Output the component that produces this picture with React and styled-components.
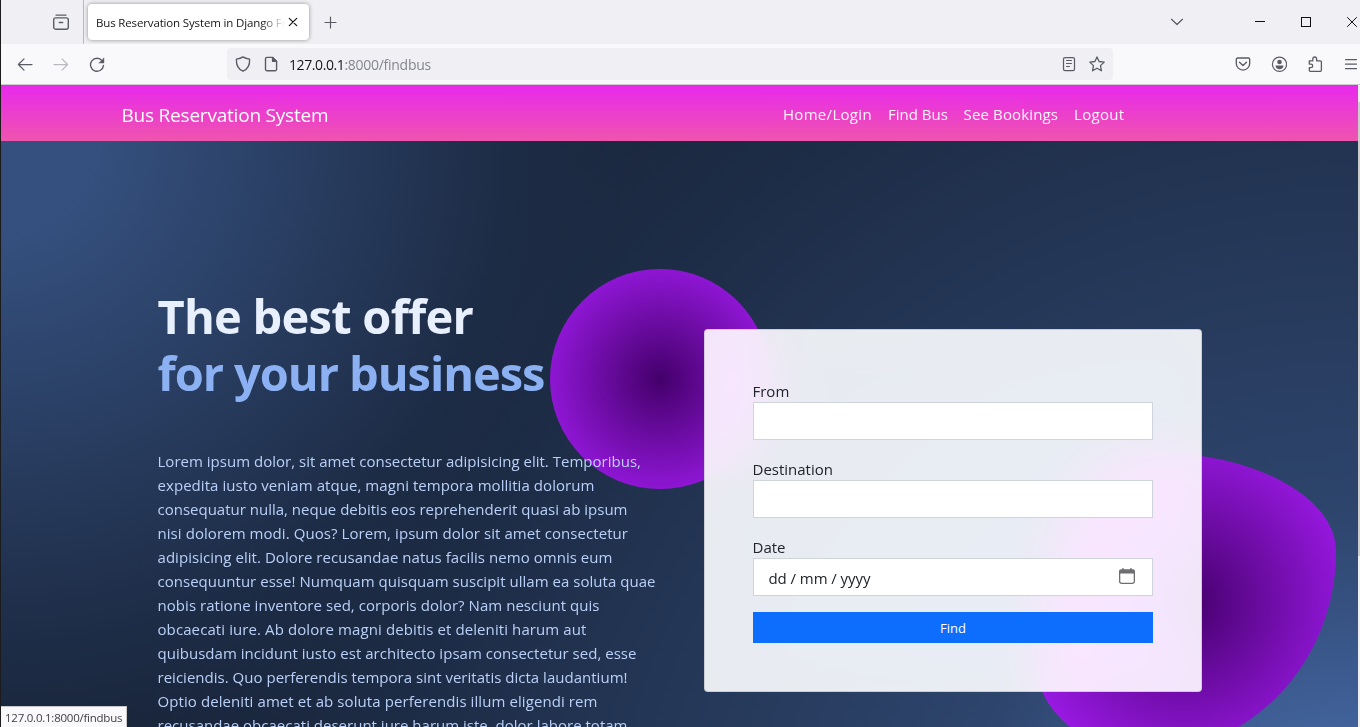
import React from "react";
import styled, { createGlobalStyle } from "styled-components";

const GlobalStyle = createGlobalStyle`
  *, *::before, *::after { box-sizing: border-box; }
  body {
    margin: 0;
    overflow: hidden;
    font-family: "Open Sans", "Noto Sans", sans-serif;
    color: #212529;
  }
`;

const Window = styled.div`
  position: relative;
  display: flex;
  flex-direction: column;
  width: 1360px;
  height: 727px;
  overflow: hidden;
  border-left: 1px solid #1b1b1b;
  background: #f9f9fb;
`;

/* ---------- browser chrome ---------- */

const TabStrip = styled.div`
  display: flex;
  align-items: center;
  flex: none;
  height: 44px;
  background: #f0f0f4;
  color: #5b5b66;
`;

const PinnedArea = styled.div`
  display: flex;
  align-items: center;
  justify-content: flex-end;
  width: 83px;
  height: 44px;
  padding-right: 14px;
  border-right: 1px solid #b9b9bf;
`;

const Tab = styled.div`
  display: flex;
  align-items: center;
  width: 221px;
  height: 36px;
  margin-left: 4px;
  padding: 0 8px;
  border-radius: 4px;
  background: #fff;
  box-shadow: 0 0 4px rgba(0, 0, 0, 0.4);
  color: #15141a;
`;

const TabTitle = styled.span`
  flex: 1;
  overflow: hidden;
  padding-top: 1px;
  white-space: nowrap;
  font-size: 11.5px;
  line-height: 16px;
  letter-spacing: -0.149px;
  mask-image: linear-gradient(to left, transparent, #000 24px);
`;

const NewTab = styled.div`
  display: flex;
  margin-left: 13px;
`;

const WindowControls = styled.div`
  display: flex;
  align-items: center;
  margin-left: auto;
  margin-right: -15px;
  color: #111;
`;

const ControlSlot = styled.div`
  display: flex;
  flex: none;
  justify-content: center;
  width: ${(p) => p.$width || 46}px;
  color: ${(p) => (p.$muted ? "#5b5b66" : "inherit")};
`;

const Toolbar = styled.div`
  display: flex;
  align-items: center;
  flex: none;
  height: 41px;
  padding-left: 16px;
  border-bottom: 1px solid #cccccc;
  background: #f9f9fb;
  color: #5b5b66;
`;

const NavButtons = styled.div`
  display: flex;
  gap: 20px;
  width: 210px;
`;

const AddressBar = styled.div`
  display: flex;
  align-items: center;
  width: 886px;
  height: 32px;
  padding: 0 8px;
  border-radius: 4px;
  background: #f0f0f4;
`;

const Url = styled.div`
  flex: 1;
  display: flex;
  margin: 1px 0 0 10px;
  font-size: 14px;
  line-height: 20px;
`;

const UrlHost = styled.span`
  color: #15141a;
  letter-spacing: -0.4px;
`;

const UrlPath = styled.span`
  color: #85858e;
  letter-spacing: -0.28px;
`;

const AddressIcons = styled.div`
  display: flex;
  gap: 12px;
`;

const ToolbarActions = styled.div`
  display: flex;
  gap: 20px;
  margin-left: 122px;
`;

const Icon = styled.svg`
  display: block;
  flex: none;
  width: 16px;
  height: 16px;
  fill: none;
  stroke: currentColor;
  stroke-width: ${(p) => p.$weight || 1.25};
  stroke-linecap: round;
  stroke-linejoin: round;
  opacity: ${(p) => (p.$dim ? 0.4 : 1)};
`;

const DocIcon = styled(Icon)`
  margin-left: 12px;
`;

const StatusBubble = styled.div`
  position: absolute;
  left: 0;
  bottom: 0;
  width: 126px;
  height: 21px;
  padding-left: 4px;
  border-top: 1px solid #c8c8c8;
  border-right: 1px solid #c8c8c8;
  background: #f9f9fb;
  color: #3f3f46;
  font-size: 11.5px;
  line-height: 21px;
  letter-spacing: -0.24px;
  white-space: nowrap;
`;

/* ---------- page ---------- */

const Viewport = styled.div`
  display: flex;
  flex: 1;
  min-height: 0;
  overflow: hidden;
`;

const Page = styled.div`
  flex: none;
  width: 1357px;
`;

const Scrollbar = styled.div`
  flex: 1;
  padding-top: 17px;
  background: #f0f0f0;
`;

const ScrollThumb = styled.div`
  height: 454px;
  background: #cdcdcd;
`;

const Navbar = styled.nav`
  display: flex;
  align-items: center;
  justify-content: space-between;
  height: 56px;
  padding: 0 234px 0 120.5px;
  background: linear-gradient(#e829ec, #ef54ae);
  color: #fff;
`;

const Brand = styled.a`
  padding-top: 4px;
  font-size: 19px;
  line-height: 30px;
  letter-spacing: -0.21px;
`;

const NavLinks = styled.div`
  display: flex;
  gap: 16px;
`;

const NavLink = styled.a`
  width: ${(p) => p.$width}px;
  padding-top: 2px;
  font-size: 15px;
  line-height: 24px;
  letter-spacing: ${(p) => p.$spacing}px;
  color: rgba(255, 255, 255, 0.95);
  white-space: nowrap;
`;

const Hero = styled.section`
  height: 806px;
  padding: 96px 132.5px;
  overflow: hidden;
  background-color: hsl(218, 41%, 15%);
  background-image:
    radial-gradient(650px circle at 0% 0%,
      hsl(218, 41%, 35%) 15%, hsl(218, 41%, 30%) 35%,
      hsl(218, 41%, 20%) 75%, hsl(218, 41%, 19%) 80%, transparent 100%),
    radial-gradient(1250px circle at 100% 100%,
      hsl(218, 41%, 45%) 15%, hsl(218, 41%, 30%) 35%,
      hsl(218, 41%, 20%) 75%, hsl(218, 41%, 19%) 80%, transparent 100%);
`;

const HeroRow = styled.div`
  display: grid;
  grid-template-columns: 546px 546px;
  align-items: center;
`;

const Copy = styled.div`
  position: relative;
  z-index: 10;
  padding: 51px 24px 23px;
`;

const Headline = styled.h1`
  margin: 0 0 47px;
  font-size: 47px;
  font-weight: 700;
  line-height: 57px;
  letter-spacing: -0.75px;
  color: hsl(218, 81%, 95%);
  white-space: nowrap;
`;

const HeadlineAccent = styled.span`
  display: block;
  letter-spacing: -1.06px;
  color: hsl(218, 81%, 75%);
`;

const Lead = styled.p`
  margin: 0;
  font-size: 15px;
  line-height: 24px;
  color: hsl(218, 81%, 85%);
`;

const LeadLine = styled.span`
  display: block;
  white-space: nowrap;
  letter-spacing: ${(p) => p.$spacing}px;
`;

const FormColumn = styled.div`
  position: relative;
  padding: 0 24px;
`;

const Shape = styled.div`
  position: absolute;
  background: radial-gradient(#44006b, #ad1fff);
`;

const RoundShape = styled(Shape)`
  top: -60px;
  left: -130px;
  width: 220px;
  height: 220px;
  border-radius: 50%;
`;

const BlobShape = styled(Shape)`
  right: -110px;
  bottom: -60px;
  width: 300px;
  height: 300px;
  border-radius: 38% 62% 63% 37% / 70% 33% 67% 30%;
`;

const Card = styled.form`
  position: relative;
  display: flex;
  flex-direction: column;
  gap: 16px;
  margin: 0;
  padding: 48px;
  border: 1px solid rgba(0, 0, 0, 0.125);
  border-radius: 4px;
  background-color: hsla(0, 0%, 100%, 0.9);
  background-clip: border-box;
  backdrop-filter: saturate(200%) blur(25px);
`;

const Field = styled.label`
  display: block;
  font-size: 15px;
  line-height: 24px;
`;

const FieldName = styled.span`
  display: block;
  height: 24px;
  padding-top: 1px;
`;

const Control = styled.div`
  display: flex;
  align-items: center;
  justify-content: space-between;
  height: 38px;
  padding: 2px 17px 0 15px;
  border: 1px solid #ced4da;
  background: #fff;
`;

const DateParts = styled.span`
  margin-top: -1px;
  letter-spacing: -0.06px;
`;

const CalendarIcon = styled(Icon)`
  margin-top: -4px;
  color: #6e6e72;
`;

const SubmitButton = styled.button`
  height: 31px;
  padding: 1px 0 0 1px;
  border: 0;
  background: #0d6efd;
  color: #fff;
  font-family: inherit;
  font-size: 13px;
  line-height: 21px;
`;

const leadLines = [
  ["Lorem ipsum dolor, sit amet consectetur adipisicing elit. Temporibus,", 0.015],
  ["expedita iusto veniam atque, magni tempora mollitia dolorum", 0.06],
  ["consequatur nulla, neque debitis eos reprehenderit quasi ab ipsum", 0.001],
  ["nisi dolorem modi. Quos? Lorem, ipsum dolor sit amet consectetur", 0.068],
  ["adipisicing elit. Dolore recusandae natus facilis nemo omnis eum", 0.044],
  ["consequuntur esse! Numquam quisquam suscipit ullam ea soluta quae", 0.029],
  ["nobis ratione inventore sed, corporis dolor? Nam nesciunt quis", 0.049],
  ["obcaecati iure. Ab dolore magni debitis et deleniti harum aut", 0.097],
  ["quibusdam incidunt iusto est architecto ipsam consectetur sed, esse", 0.026],
  ["reiciendis. Quo perferendis tempora sint veritatis dicta laudantium!", 0.017],
  ["Optio deleniti amet et ab soluta perferendis illum eligendi rem", 0.083],
  ["recusandae obcaecati deserunt iure harum iste, dolor labore totam", 0.009],
  ["\u00a0", 0],
];

const navLinks = [
  ["Home/Login", 89, 0.3],
  ["Find Bus", 59.5, 0],
  ["See Bookings", 94.5, 0.15],
  ["Logout", 50, 0.3],
];

function BrowserTabs() {
  return (
    <TabStrip>
      <PinnedArea>
        <Icon viewBox="0 0 16 16" $weight={1.4}>
          <path d="M3 1.1h10" />
          <rect x=".7" y="3.9" width="14.6" height="11.3" rx="2" />
          <path d="M6.3 8.5h3.4" />
        </Icon>
      </PinnedArea>
      <Tab>
        <TabTitle>Bus Reservation System in Django Framework</TabTitle>
        <Icon viewBox="0 0 16 16" $weight={1.2}>
          <path d="M4.3 4.3l7.4 7.4M11.7 4.3l-7.4 7.4" />
        </Icon>
      </Tab>
      <NewTab>
        <Icon viewBox="0 0 16 16" $weight={1.2}>
          <path d="M8.5 3v11M3 8.500h11" />
        </Icon>
      </NewTab>
      <WindowControls>
        <ControlSlot $width={120} $muted>
          <Icon viewBox="0 0 16 16">
            <path d="M2.5 5.3L8 10.5l5.5-5.2" />
          </Icon>
        </ControlSlot>
        <ControlSlot>
          <Icon viewBox="0 0 16 16" $weight={1} shapeRendering="crispEdges">
            <path d="M3.5 7.5h9" />
          </Icon>
        </ControlSlot>
        <ControlSlot>
          <Icon viewBox="0 0 16 16" $weight={1} shapeRendering="crispEdges">
            <path d="M3.5 3.5h9v9h-9z" />
          </Icon>
        </ControlSlot>
        <ControlSlot>
          <Icon viewBox="0 0 16 16" $weight={1}>
            <path d="M3.500 3.500l9 9M12.500 3.500l-9 9" />
          </Icon>
        </ControlSlot>
      </WindowControls>
    </TabStrip>
  );
}

function BrowserToolbar() {
  return (
    <Toolbar>
      <NavButtons>
        <Icon viewBox="0 0 16 16">
          <path d="M15 8.500H1.500M7 2.900L1.400 8.500 7 14.100" />
        </Icon>
        <Icon viewBox="0 0 16 16" $dim>
          <path d="M1 8.500h13.500M9 2.900l5.600 5.600L9 14.100" />
        </Icon>
        <Icon viewBox="0 0 16 16" $weight={1.35}>
          <path d="M13.200 4.800A6.500 6.500 0 1 0 14.500 9.400" />
          <path d="M15 2.100v5h-5z" fill="currentColor" strokeWidth=".4" />
        </Icon>
      </NavButtons>
      <AddressBar>
        <Icon viewBox="0 0 16 16" $weight={1.35}>
          <path d="M8 .9c2 1.500 4.300 2 6.600 2.300.3 5.500-2 10-6.600 12-4.600-2-6.900-6.500-6.600-12C3.700 2.900 6 2.400 8 .9z" />
        </Icon>
        <DocIcon viewBox="0 0 16 16" $weight={1.4}>
          <path d="M4 1.400h5.600l4 4v7.800a1.500 1.500 0 0 1-1.500 1.500H4a1.500 1.500 0 0 1-1.500-1.500V2.900A1.500 1.500 0 0 1 4 1.400z" />
          <path d="M9.600 1.400v4h4z" fill="currentColor" />
        </DocIcon>
        <Url>
          <UrlHost>127.0.0.1</UrlHost>
          <UrlPath>:8000/findbus</UrlPath>
        </Url>
        <AddressIcons>
          <Icon viewBox="0 0 16 16">
            <rect x="2.500" y="1.500" width="11" height="13" rx="1.600" />
            <path d="M5.500 4.500h5M5.500 7.500h5M5.500 10.500h3" strokeWidth="1.100" />
          </Icon>
          <Icon viewBox="0 0 16 16" $weight={1.3}>
            <path d="M8 .9l2.100 4.600 5.100.600-3.700 3.500.950 5.200L8 12.200l-4.450 2.600.950-5.200L.8 6.100l5.100-.600z" />
          </Icon>
        </AddressIcons>
      </AddressBar>
      <ToolbarActions>
        <Icon viewBox="0 0 16 16" $weight={1.35}>
          <path d="M2.700 2h10.600a1.400 1.400 0 0 1 1.400 1.400v4A6.700 6.700 0 0 1 1.300 7.400v-4A1.400 1.400 0 0 1 2.700 2z" />
          <path d="M4.500 6.200L8 9.600l3.500-3.400" />
        </Icon>
        <Icon viewBox="0 0 16 16" $weight={1.2}>
          <circle cx="8.500" cy="8.300" r="7.100" />
          <circle cx="8.500" cy="6" r="2.300" fill="currentColor" stroke="none" />
          <path d="M4.500 9.500h8c0 2.300-1.700 3.700-4 3.700s-4-1.400-4-3.700z" fill="currentColor" stroke="none" />
        </Icon>
        <Icon viewBox="0 0 16 16" $weight={1.3}>
          <path d="M2.300 4.800h3.500V2.900a1.900 1.900 0 0 1 3.800 0v1.900h3.800a1 1 0 0 1 1 1v8.500a1 1 0 0 1-1 1H3.300a1 1 0 0 1-1-1v-2.600h1.600a1.800 1.800 0 0 0 0-3.600H2.300z" />
        </Icon>
        <Icon viewBox="0 0 16 16">
          <path d="M2.500 3.500h11M2.500 8h11M2.500 12.500h11" />
        </Icon>
      </ToolbarActions>
    </Toolbar>
  );
}

function SearchCard() {
  return (
    <Card>
      <Field>
        <FieldName>From</FieldName>
        <Control />
      </Field>
      <Field>
        <FieldName>Destination</FieldName>
        <Control />
      </Field>
      <Field>
        <FieldName>Date</FieldName>
        <Control>
          <DateParts>dd / mm / yyyy</DateParts>
          <CalendarIcon viewBox="0 0 16 16" $weight={1.3}>
            <rect x=".65" y="2" width="14.700" height="13.300" rx="1.800" />
            <path d="M.8 2.200h14.400v3.100H.8z" fill="currentColor" strokeWidth=".4" />
            <path d="M4 .8v2M12 .8v2" strokeWidth="1.600" />
          </CalendarIcon>
        </Control>
      </Field>
      <SubmitButton type="button">Find</SubmitButton>
    </Card>
  );
}

export default function App() {
  return (
    <Window>
      <GlobalStyle />
      <BrowserTabs />
      <BrowserToolbar />
      <Viewport>
        <Page>
          <Navbar>
            <Brand>Bus Reservation System</Brand>
            <NavLinks>
              {navLinks.map(([name, width, spacing]) => (
                <NavLink key={name} $width={width} $spacing={spacing}>
                  {name}
                </NavLink>
              ))}
            </NavLinks>
          </Navbar>
          <Hero>
            <HeroRow>
              <Copy>
                <Headline>
                  The best offer
                  <HeadlineAccent>for your business</HeadlineAccent>
                </Headline>
                <Lead>
                  {leadLines.map(([text, spacing]) => (
                    <LeadLine key={text} $spacing={spacing}>
                      {text}
                    </LeadLine>
                  ))}
                </Lead>
              </Copy>
              <FormColumn>
                <RoundShape />
                <BlobShape />
                <SearchCard />
              </FormColumn>
            </HeroRow>
          </Hero>
        </Page>
        <Scrollbar>
          <ScrollThumb />
        </Scrollbar>
      </Viewport>
      <StatusBubble>127.0.0.1:8000/findbus</StatusBubble>
    </Window>
  );
}
